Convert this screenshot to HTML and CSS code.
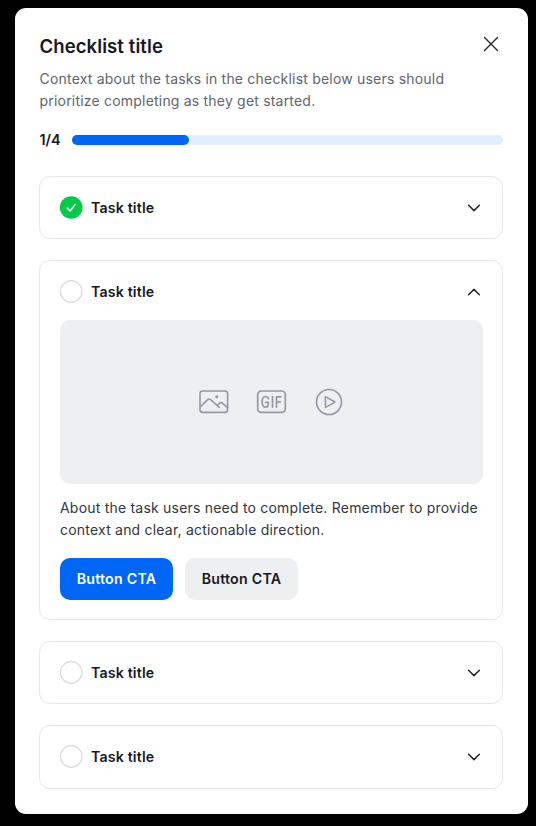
FILE: index.html
```html
<!DOCTYPE html>
<html lang="en">
<head>
<meta charset="utf-8">
<title>Checklist</title>
<link rel="stylesheet" href="styles.css">
</head>
<body>
<main class="checklist">
  <header class="header">
    <h1 class="title"><span>Checklist title</span></h1>
    <button class="close" aria-label="Close"><svg width="16" height="16" viewBox="0 0 16 16"><path d="M1.5 1.500l13 13M14.500 1.500l-13 13"/></svg></button>
  </header>
  <p class="intro"><span>Context about the tasks in the checklist below users should</span><br><span>prioritize completing as they get started.</span></p>
  <div class="progress"><span class="count">1/4</span><div class="track"><div class="fill"></div></div></div>
  <div class="tasks">
    <section class="task">
      <div class="row">
        <svg class="status done" viewBox="0 0 23 23"><circle cx="11.2" cy="11.5" r="11.300"/><path d="M7.200 12.100l2.900 2.800 5-6.300"/></svg>
        <h2 class="name"><span>Task title</span></h2>
        <svg class="chevron" viewBox="0 0 14 8"><path d="M1.600 1.200L7 6.600l5.400-5.400"/></svg>
      </div>
    </section>
    <section class="task open">
      <div class="row">
        <svg class="status" viewBox="0 0 23 23"><circle cx="11.200" cy="11.500" r="10.800"/></svg>
        <h2 class="name"><span>Task title</span></h2>
        <svg class="chevron" viewBox="0 0 14 8"><path d="M1.600 6.800L7 1.400l5.400 5.400"/></svg>
      </div>
      <div class="media">
        <svg width="30" height="24" viewBox="0 0 30 24"><rect x="1" y="1" width="27.600" height="21.400" rx="2.600"/><path d="M1.400 16.800l7-6.900c1.100-1.100 2.400-1.100 3.500 0l8.300 7.400M18.300 15.800l1.900-2.300c1-1.100 2.400-1.100 3.400-.1l4.800 4.200"/><circle class="dot" cx="17.800" cy="6.800" r="1.500"/></svg>
        <svg class="gif" width="30" height="24" viewBox="0.500 0 30 24"><rect x="1.200" y="1" width="27.600" height="21.400" rx="3.600"/><path d="M12 8.800C11.400 7 10.300 6.500 9 6.500c-2.200 0-3.400 2-3.400 5.300s1.300 5.300 3.400 5.300c2 0 3-1.400 3-4.700H9.300M16 6.500v10.600M20 17.100V6.900h4.300M20 11.900h3.700"/></svg>
        <svg width="28" height="28" viewBox="0 0 28 28"><circle cx="14" cy="14" r="12.500"/><path d="M10.400 9.200v9.600c0 .3.300.4.600.3l8.600-4.700c.3-.2.300-.5 0-.7l-8.600-4.800c-.3-.2-.6 0-.6.3z"/></svg>
      </div>
      <p class="body"><span>About the task users need to complete. Remember to provide</span><br><span>context and clear, actionable direction.</span></p>
      <div class="actions">
        <button class="btn primary"><span>Button CTA</span></button>
        <button class="btn"><span>Button CTA</span></button>
      </div>
    </section>
    <section class="task">
      <div class="row">
        <svg class="status" viewBox="0 0 23 23"><circle cx="11.200" cy="11.500" r="10.800"/></svg>
        <h2 class="name"><span>Task title</span></h2>
        <svg class="chevron" viewBox="0 0 14 8"><path d="M1.600 1.200L7 6.600l5.400-5.400"/></svg>
      </div>
    </section>
    <section class="task">
      <div class="row">
        <svg class="status" viewBox="0 0 23 23"><circle cx="11.200" cy="11.500" r="10.800"/></svg>
        <h2 class="name"><span>Task title</span></h2>
        <svg class="chevron" viewBox="0 0 14 8"><path d="M1.600 1.200L7 6.600l5.400-5.400"/></svg>
      </div>
    </section>
  </div>
</main>
</body>
</html>
```
FILE: styles.css
```css
* { box-sizing: border-box; }
html, body { margin: 0; background: #000; }
body {
  height: 826px;
  overflow: hidden;
  padding: 7.500px 8.400px 0 14.500px;
  font-family: Inter, "Liberation Sans", sans-serif;
  font-size: 14.200px;
  color: #16181d;
}
h1, h2, p { margin: 0; }
button { border: 0; padding: 0; font: inherit; color: inherit; }
svg { display: block; overflow: visible; fill: none; stroke-linecap: round; stroke-linejoin: round; }
.checklist {
  height: 806px;
  padding: 25px 24.600px 0 25px;
  background: #fff;
  border-radius: 11px;
}
.header { display: flex; justify-content: space-between; align-items: flex-start; height: 34px; }
.title { font-size: 18.500px; line-height: 27px; font-weight: 600; letter-spacing: 0.100px; }
.close { margin: 3.400px 4.500px 0 0; background: none; }
.close svg { stroke: #25272c; stroke-width: 1.400; }
.intro { margin-top: 1.200px; font-size: 14px; line-height: 22.500px; color: #62656b; letter-spacing: 0.200px; }
.progress { display: flex; align-items: center; height: 22px; margin-top: 16.300px; }
.count { width: 32.500px; font-weight: 600; font-size: 14.400px; }
.track { flex: 1; height: 10.500px; border-radius: 6px; background: #e0efff; }
.fill { width: 117px; height: 100%; border-radius: 6px; background: #0066f5; }
.tasks { display: grid; gap: 21px; margin: 25px 0 0 -0.300px; }
.task {
  height: 63.300px;
  padding: 19px 19.500px 19px 19.800px;
  border: 1px solid #e6e8eb;
  border-radius: 11px;
}
.task.open { height: 359.700px; }
.row { display: flex; align-items: center; height: 24px; }
.status { width: 23px; height: 23px; margin: -1px 8px 0 0; stroke: #d7d9e0; stroke-width: 1.200; }
.done circle { fill: #00cc47; stroke: none; }
.done path { stroke: #fff; stroke-width: 1.600; }
.name { flex: 1; font-size: 14.200px; line-height: 22px; font-weight: 600; letter-spacing: 0.150px; }
.chevron { width: 14px; height: 8px; margin-right: 1.200px; stroke: #25272c; stroke-width: 1.500; }
.media {
  display: flex;
  align-items: center;
  justify-content: center;
  gap: 28px;
  height: 164px;
  margin-top: 15.500px;
  border-radius: 10px;
  background: #eeeff1;
}
.media svg { stroke: #9299a8; stroke-width: 1.600; }
.media .gif { stroke-width: 1.700; }
.media .dot { fill: #9299a8; stroke: none; }
.body { margin: 13px -10px 0 0; font-size: 14px; line-height: 22.500px; color: #33363d; letter-spacing: 0.210px; }
.actions { display: flex; gap: 12px; margin-top: 16px; }
.btn { width: 113px; height: 42px; border-radius: 10px; background: #eeeff1; font-weight: 600; letter-spacing: 0.240px; }
.btn.primary { background: #0066f5; color: #fff; }
```
